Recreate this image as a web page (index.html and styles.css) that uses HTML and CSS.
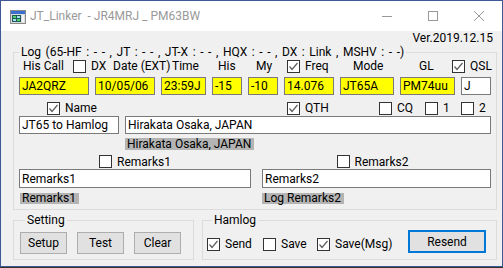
FILE: index.html
```html
<!DOCTYPE html>
<html lang="ja">
<head>
    <meta charset="UTF-8">
    <title>JT_Linker</title>
    <link rel="stylesheet" href="styles.css">
</head>
<body>
    <div class="window">
        <div class="titlebar">
            <svg class="app-icon" width="16" height="14" viewBox="0 0 16 14">
                <rect x="0.5" y="0.5" width="15" height="13" fill="#dcdcdc" stroke="#8a8a8a"/>
                <rect x="1" y="1" width="14" height="3" fill="#3a6fd0"/>
                <rect x="2" y="5" width="9" height="7" fill="#1f5a5a"/>
                <rect x="3" y="6" width="3" height="2" fill="#4fd06a"/>
                <rect x="7" y="6" width="3" height="2" fill="#9ee0f0"/>
                <rect x="3" y="9" width="3" height="2" fill="#9ee0f0"/>
                <rect x="7" y="9" width="3" height="2" fill="#4fd06a"/>
                <rect x="12" y="5" width="2" height="7" fill="#f4f4f4"/>
            </svg>
            <span class="title">JT_Linker&nbsp; - JR4MRJ _ PM63BW</span>
            <div class="caption">
                <span class="cap-btn">
                    <svg width="10" height="10" viewBox="0 0 10 10"><line x1="0" y1="5.5" x2="10" y2="5.5" stroke="#999"/></svg>
                </span>
                <span class="cap-btn">
                    <svg width="10" height="10" viewBox="0 0 10 10"><rect x="0.5" y="0.5" width="9" height="9" fill="none" stroke="#999"/></svg>
                </span>
                <span class="cap-btn">
                    <svg width="10" height="10" viewBox="0 0 10 10"><path d="M0 0L10 10M10 0L0 10" stroke="#999"/></svg>
                </span>
            </div>
        </div>

        <div class="client">
            <div class="version">Ver.2019.12.15</div>

            <fieldset class="group log">
                <legend>Log (65-HF : - - , JT : - - , JT-X : - - , HQX : - - , DX : Link , MSHV : - -)</legend>

                <div class="row heads">
                    <span class="c-call">His Call</span>
                    <label class="check c-dx"><span class="box"></span>DX</label>
                    <span class="c-date">Date (EXT)</span>
                    <span class="c-time">Time</span>
                    <span class="c-his">His</span>
                    <span class="c-my">My</span>
                    <label class="check c-freq"><span class="box"><svg width="11" height="11" viewBox="0 0 11 11"><polyline points="1.5,5.5 4,8.5 9.5,2" fill="none" stroke="#5c5c5c" stroke-width="1.2"/></svg></span>Freq</label>
                    <span class="c-mode">Mode</span>
                    <span class="c-gl">GL</span>
                    <label class="check"><span class="box"><svg width="11" height="11" viewBox="0 0 11 11"><polyline points="1.5,5.5 4,8.5 9.5,2" fill="none" stroke="#5c5c5c" stroke-width="1.2"/></svg></span>QSL</label>
                </div>

                <div class="row fields">
                    <input class="field hl w70" value="JA2QRZ">
                    <input class="field hl w60" value="10/05/06">
                    <input class="field hl w45" value="23:59J">
                    <input class="field hl w30" value="-15">
                    <input class="field hl w30" value="-10">
                    <input class="field hl w50" value="14.076">
                    <input class="field hl w54" value="JT65A">
                    <input class="field hl w55" value="PM74uu">
                    <input class="field w30" value="J">
                </div>

                <div class="row toggles">
                    <label class="check c-name"><span class="box"><svg width="11" height="11" viewBox="0 0 11 11"><polyline points="1.5,5.5 4,8.5 9.5,2" fill="none" stroke="#5c5c5c" stroke-width="1.2"/></svg></span>Name</label>
                    <label class="check c-qth"><span class="box"><svg width="11" height="11" viewBox="0 0 11 11"><polyline points="1.5,5.5 4,8.5 9.5,2" fill="none" stroke="#5c5c5c" stroke-width="1.2"/></svg></span>QTH</label>
                    <label class="check c-cq"><span class="box"></span>CQ</label>
                    <label class="check c-one"><span class="box"></span>1</label>
                    <label class="check"><span class="box"></span>2</label>
                </div>

                <div class="row fields qth-row">
                    <input class="field w100" value="JT65 to Hamlog">
                    <input class="field w366" value="Hirakata Osaka, JAPAN">
                </div>

                <div class="row echo-row">
                    <span class="echo">Hirakata Osaka, JAPAN</span>
                </div>

                <div class="row halves rm-toggles">
                    <div class="cell-l center">
                        <label class="check"><span class="box"></span>Remarks1</label>
                    </div>
                    <div class="cell-r center nudge">
                        <label class="check"><span class="box"></span>Remarks2</label>
                    </div>
                </div>

                <div class="row halves rm-fields">
                    <input class="field cell-l" value="Remarks1">
                    <input class="field cell-r" value="Remarks2">
                </div>

                <div class="row halves rm-echo">
                    <div class="cell-l"><span class="echo first">Remarks1</span></div>
                    <div class="cell-r"><span class="echo">Log Remarks2</span></div>
                </div>
            </fieldset>

            <div class="bottom">
                <fieldset class="group setting">
                    <legend>Setting</legend>
                    <div class="buttons">
                        <button class="btn">Setup</button>
                        <button class="btn">Test</button>
                        <button class="btn">Clear</button>
                    </div>
                </fieldset>

                <fieldset class="group hamlog">
                    <legend>Hamlog</legend>
                    <div class="hamlog-row">
                        <label class="check c-send"><span class="box"><svg width="11" height="11" viewBox="0 0 11 11"><polyline points="1.5,5.5 4,8.5 9.5,2" fill="none" stroke="#5c5c5c" stroke-width="1.2"/></svg></span>Send</label>
                        <label class="check c-save"><span class="box"></span>Save</label>
                        <label class="check c-savemsg"><span class="box"><svg width="11" height="11" viewBox="0 0 11 11"><polyline points="1.5,5.5 4,8.5 9.5,2" fill="none" stroke="#5c5c5c" stroke-width="1.2"/></svg></span>Save(Msg)</label>
                        <button class="btn default">Resend</button>
                    </div>
                </fieldset>
            </div>
        </div>
    </div>
</body>
</html>
```

FILE: styles.css
```css
body {
    margin: 0;
    background: #38322b;
    font-family: Roboto, "Liberation Sans", sans-serif;
    font-size: 12px;
    color: #000;
}

.window {
    width: 503px;
    height: 267px;
    box-sizing: border-box;
    border: 1px solid #3d5a96;
    background: #f0f0f0;
    display: flex;
    flex-direction: column;
}

/* title bar */

.titlebar {
    height: 30px;
    flex-shrink: 0;
    background: #fff;
    display: flex;
    align-items: center;
}

.app-icon {
    margin: 1px 4px 0 9px;
}

.title {
    color: #999;
    font-size: 12px;
}

.caption {
    margin-left: auto;
    display: flex;
}

.cap-btn {
    width: 46px;
    height: 30px;
    display: flex;
    align-items: center;
    justify-content: center;
}

/* client area */

.client {
    flex: 1;
}

.version {
    text-align: right;
    padding: 1px 9px 0 0;
    line-height: 13px;
}

.group {
    box-sizing: border-box;
    margin: 0;
    padding: 0;
    min-width: 0;
    border: 1px solid #dcdcdc;
}

.group legend {
    margin-left: 5px;
    padding: 0 2px;
    line-height: 14px;
}

.log {
    margin: 0 5px 0 12px;
    padding-bottom: 6px;
}

.log legend {
    word-spacing: 1.6px;
}

.row {
    display: flex;
    align-items: center;
}

.check {
    display: flex;
    align-items: center;
    gap: 5px;
    flex-shrink: 0;
}

.box {
    width: 13px;
    height: 13px;
    box-sizing: border-box;
    border: 1px solid #333;
    background: #fff;
    display: flex;
}

.heads {
    height: 14px;
    padding-left: 9px;
}

.heads > * {
    flex-shrink: 0;
}

.c-call { width: 50px; }
.c-dx { width: 40px; }
.c-date { width: 59px; }
.c-time { width: 46px; }
.c-his { width: 38px; }
.c-my { width: 31px; }
.c-freq { width: 66px; }
.c-mode { width: 66px; }
.c-gl { width: 33px; }

.fields {
    height: 18px;
    margin-top: 4px;
    padding-left: 5px;
    gap: 6px;
}

.field {
    box-sizing: border-box;
    height: 18px;
    margin: 0;
    padding: 0 2px;
    border: 1px solid #7a7a7a;
    background: #fff;
    color: #000;
    font: inherit;
    outline: none;
    flex-shrink: 0;
}

.field.hl {
    background: #ffff00;
}

.w30 { width: 30px; }
.w45 { width: 45px; }
.w50 { width: 50px; }
.w54 { width: 54px; }
.w55 { width: 55px; }
.w60 { width: 60px; }
.w70 { width: 70px; }
.w100 { width: 100px; }
.w366 { width: 366px; }

.toggles {
    height: 14px;
    margin-top: 6px;
    padding-left: 33px;
}

.c-name { width: 240px; }
.c-qth { width: 92px; }
.c-cq { width: 46px; }
.c-one { width: 36px; }

.qth-row {
    margin-top: 1px;
}

.echo-row {
    margin-top: 4px;
    padding-left: 111px;
}

.echo {
    display: inline-block;
    height: 12px;
    line-height: 12px;
    padding: 0 3px 0 2px;
    background: #b4b4b4;
}

.halves {
    padding-left: 5px;
    gap: 11px;
}

.cell-l { width: 232px; }
.cell-r { width: 229px; }

.center {
    display: flex;
    justify-content: center;
}

.nudge {
    box-sizing: border-box;
    padding-right: 8px;
}

.rm-toggles {
    height: 13px;
    margin-top: 5px;
}

.rm-fields {
    margin-top: 1px;
}

.rm-fields .field {
    height: 19px;
}

.rm-echo {
    height: 11px;
    margin-top: 4px;
}

.rm-echo .echo {
    height: 11px;
    line-height: 11px;
}

.echo.first {
    margin-left: 1px;
}

/* bottom groups */

.bottom {
    display: flex;
    gap: 8px;
    margin: 3px 5px 0 12px;
}

.setting {
    width: 181px;
    padding: 0 0 5px 6px;
}

.buttons {
    display: flex;
    gap: 10px;
    margin-top: 5px;
}

.btn {
    box-sizing: border-box;
    width: 47px;
    height: 22px;
    padding: 0;
    border: 1px solid #adadad;
    background: #e1e1e1;
    color: #000;
    font: inherit;
}

.hamlog {
    flex: 1;
    padding-left: 4px;
}

.hamlog-row {
    display: flex;
    align-items: flex-start;
}

.hamlog-row .check {
    margin-top: 10px;
}

.c-send { width: 56px; }
.c-save { width: 54px; }
.c-savemsg { width: 91px; }

.btn.default {
    width: 78px;
    height: 23px;
    margin-top: 3px;
    border: 2px solid #0078d7;
}
```
